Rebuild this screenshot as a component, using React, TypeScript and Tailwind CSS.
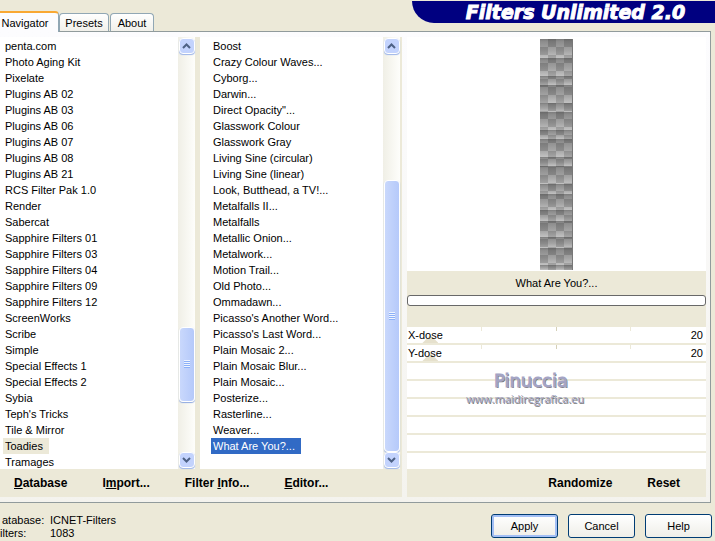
import React, { useState } from 'react';

const categories = [
    'penta.com', 'Photo Aging Kit', 'Pixelate', 'Plugins AB 02', 'Plugins AB 03',
    'Plugins AB 06', 'Plugins AB 07', 'Plugins AB 08', 'Plugins AB 21',
    'RCS Filter Pak 1.0', 'Render', 'Sabercat', 'Sapphire Filters 01',
    'Sapphire Filters 03', 'Sapphire Filters 04', 'Sapphire Filters 09',
    'Sapphire Filters 12', 'ScreenWorks', 'Scribe', 'Simple', 'Special Effects 1',
    'Special Effects 2', 'Sybia', "Teph's Tricks", 'Tile & Mirror', 'Toadies', 'Tramages',
];

const filters = [
    'Boost', 'Crazy Colour Waves...', 'Cyborg...', 'Darwin...', 'Direct Opacity"...',
    'Glasswork Colour', 'Glasswork Gray', 'Living Sine (circular)',
    'Living Sine (linear)', 'Look, Butthead, a TV!...', 'Metalfalls II...',
    'Metalfalls', 'Metallic Onion...', 'Metalwork...', 'Motion Trail...',
    'Old Photo...', 'Ommadawn...', "Picasso's Another Word...",
    "Picasso's Last Word...", 'Plain Mosaic 2...', 'Plain Mosaic Blur...',
    'Plain Mosaic...', 'Posterize...', 'Rasterline...', 'Weaver...', 'What Are You?...',
];

// Top edge of every dark-to-light band in the preview
const bands = [0, 19, 37, 46, 64, 73, 91, 100, 118, 127, 145, 155, 171, 182, 198, 209, 226, 231];

const Arrow = ({ up }: { up?: boolean }) => (
    <svg viewBox="0 0 9 6" className="w-[9px] h-[6px]" fill="none" stroke="#4d6185" strokeWidth="2">
        <path d={up ? 'M1 5L4.5 1.5L8 5' : 'M1 1L4.5 4.5L8 1'} />
    </svg>
);

const arrowClass =
    'h-4 w-4 shrink-0 flex items-center justify-center rounded-sm border border-white bg-[#c3d3fd] shadow-[0_1px_1px_#9db5e8]';

const ScrollBar = ({ start, size, label }: { start: number; size: number; label: string }) => (
    <div className="w-[17px] shrink-0 py-px flex flex-col items-center bg-linear-to-r from-[#f0efe6] to-[#fefefb]">
        <button aria-label={`${label} up`} className={arrowClass}>
            <Arrow up />
        </button>
        <div className="flex-1 w-4 flex flex-col">
            <div className="basis-0" style={{ flexGrow: start }} />
            <div
                style={{ flexGrow: size }}
                className="basis-0 rounded-sm border border-white bg-linear-to-r from-[#c9d8fc] to-[#b5c9fa] shadow-[0_1px_1px_#8ea9e0] flex flex-col items-center justify-center"
            >
                {[0, 1, 2, 3].map((line) => (
                    <span key={line} className="w-[6px] h-[2px] bg-[#eef4fe] border-b border-[#8cb0f8]" />
                ))}
            </div>
            <div className="basis-0" style={{ flexGrow: 398 - start - size }} />
        </div>
        <button aria-label={`${label} down`} className={arrowClass}>
            <Arrow />
        </button>
    </div>
);

interface ListProps {
    label: string;
    items: string[];
    selected: string;
    selectedClass: string;
    onSelect: (item: string) => void;
}

const List = ({ label, items, selected, selectedClass, onSelect }: ListProps) => (
    <ul aria-label={label} className="flex-1 min-w-0 pt-px bg-white">
        {items.map((item) => (
            <li key={item} className="h-4 flex">
                <button
                    onClick={() => onSelect(item)}
                    className={`h-4 pl-[2px] pr-[6px] whitespace-nowrap ${item === selected ? selectedClass : ''}`}
                >
                    {item}
                </button>
            </li>
        ))}
    </ul>
);

const Preview = () => (
    <svg viewBox="0 0 33 231" className="w-[33px] h-[231px]" shapeRendering="crispEdges">
        <defs>
            <linearGradient id="band" x1="0" y1="0" x2="0" y2="1">
                <stop offset="0" stopColor="#7c7c7c" />
                <stop offset="0.15" stopColor="#8e8e8e" />
                <stop offset="0.6" stopColor="#a4a4a4" />
                <stop offset="1" stopColor="#c2c2c2" />
            </linearGradient>
        </defs>
        {bands.slice(0, -1).map((top, i) => (
            <rect key={top} y={top} width="33" height={bands[i + 1] - top} fill="url(#band)" />
        ))}
        {Array.from({ length: 29 }, (_, row) =>
            [0, 1, 2, 3].map((col) =>
                (row + col) % 2 === 1 ? (
                    <rect key={`${row}-${col}`} x={col * 8} y={row * 8} width="8" height="8" fill="#000" opacity="0.15" />
                ) : null
            )
        )}
        <rect x="32" width="1" height="231" fill="#777" />
    </svg>
);

const Dose = ({ name }: { name: string }) => {
    const [value, setValue] = useState<number>(20);
    const id = name.toLowerCase();

    return (
        <div className="h-[18px] border-b-2 border-[#ece9d8] bg-white grid grid-cols-1 overflow-hidden">
            <div className="[grid-area:1/1] grid grid-cols-4 h-1">
                <span className="border-r border-[#ece9d8]" />
                <span className="border-r border-[#d5d0b8]" />
                <span className="border-r border-[#ece9d8]" />
            </div>
            <input
                id={id}
                type="range"
                min={0}
                max={255}
                value={value}
                onChange={(e) => setValue(Number(e.target.value))}
                className="[grid-area:1/1] -mx-2 h-4 appearance-none bg-transparent [&::-webkit-slider-runnable-track]:h-4 [&::-webkit-slider-thumb]:appearance-none [&::-webkit-slider-thumb]:w-4 [&::-webkit-slider-thumb]:h-2 [&::-webkit-slider-thumb]:mt-2 [&::-webkit-slider-thumb]:bg-[#e6e1cd] [&::-webkit-slider-thumb]:[clip-path:polygon(50%_0,100%_100%,0_100%)]"
            />
            <div className="[grid-area:1/1] z-10 flex justify-between pl-px pr-[3px] pointer-events-none">
                <label htmlFor={id}>{name}</label>
                <output htmlFor={id}>{value}</output>
            </div>
        </div>
    );
};

const tabClass = 'border border-b-0 border-[#91a7b4] rounded-t-sm bg-linear-to-b from-white to-[#f1f0ea]';
const dialogButton =
    'w-[67px] h-6 rounded-[3px] border border-[#003c74] bg-linear-to-b from-white to-[#efeee8]';

const App = () => {
    const [category, setCategory] = useState<string>('Toadies');
    const [filter, setFilter] = useState<string>('What Are You?...');

    return (
        <main className="min-h-screen overflow-hidden bg-[#ece9d8] text-black text-[11px] leading-4 font-['Liberation_Sans',Arial,sans-serif]">
            <header className="h-[31px] flex items-end">
                <nav className="flex items-end">
                    <button className="w-[59px] h-[21px] -mb-px pr-2 z-10 border-t-2 border-r border-t-[#f9a832] border-r-[#91a7b4] rounded-tr-sm bg-[#fcfcfe]">
                        Navigator
                    </button>
                    <button className={`w-[50px] h-[18px] ${tabClass}`}>Presets</button>
                    <button className={`w-[44px] h-[18px] ml-px ${tabClass}`}>About</button>
                </nav>
                <h1 className="ml-auto self-start mt-px w-[303px] h-[22px] pl-6 flex items-center justify-center rounded-bl-[24px] bg-[#000080] text-white text-[19px] italic font-bold whitespace-nowrap [-webkit-text-stroke:1px_white] font-['DejaVu_Sans',sans-serif]">
                    Filters Unlimited 2.0
                </h1>
            </header>

            <section className="mr-1 py-[5px] pr-1 flex gap-[5px] border-t border-r border-b border-[#919b9c] bg-linear-to-b from-[#fcfcfe] to-[#f4f3ee]">
                <div className="w-[402px] shrink-0 flex flex-col bg-[#ece9d8]">
                    <div className="h-[432px] flex">
                        <div className="w-[195px] flex bg-white pl-[3px]">
                            <List
                                label="Categories"
                                items={categories}
                                selected={category}
                                selectedClass="bg-[#ece9d8]"
                                onSelect={setCategory}
                            />
                            <ScrollBar start={274} size={74} label="Categories" />
                        </div>
                        <div className="w-[200px] ml-[5px] flex bg-white pl-[11px]">
                            <List
                                label="Filters"
                                items={filters}
                                selected={filter}
                                selectedClass="bg-[#316ac5] text-white"
                                onSelect={setFilter}
                            />
                            <ScrollBar start={127} size={271} label="Filters" />
                        </div>
                    </div>
                    <div className="h-7 pl-[14px] flex items-center gap-[35px] text-xs font-bold">
                        <button><u>D</u>atabase</button>
                        <button>I<u>m</u>port...</button>
                        <button>Filter <u>I</u>nfo...</button>
                        <button><u>E</u>ditor...</button>
                    </div>
                </div>

                <div className="flex-1 flex flex-col bg-[#ece9d8]">
                    <div className="flex-1 flex items-center justify-center bg-white">
                        <Preview />
                    </div>
                    <div className="h-14 pt-1 text-center">
                        <p>What Are You?...</p>
                        <div
                            role="progressbar"
                            aria-label="Progress"
                            className="mt-1 h-[11px] rounded-[3px] border border-[#686868] bg-white"
                        />
                    </div>
                    <Dose name="X-dose" />
                    <Dose name="Y-dose" />
                    <div className="relative">
                        <div className="absolute top-2 left-[57px] w-[122px] text-center text-[#a4a4c4] [text-shadow:1px_1px_0_#777]">
                            <p className="pl-3 text-lg leading-5 [-webkit-text-stroke:1px_#a4a4c4] font-['Comic_Sans_MS','DejaVu_Sans',sans-serif]">Pinuccia</p>
                            <p className="leading-4 whitespace-nowrap font-['Comic_Sans_MS','Open_Sans',sans-serif]">www.maidiregrafica.eu</p>
                        </div>
                        {[0, 1, 2, 3, 4, 5].map((row) => (
                            <div key={row} className="h-[18px] border-b-2 border-[#ece9d8] bg-white last:h-4 last:border-b-0" />
                        ))}
                    </div>
                    <div className="h-7 pr-[26px] flex items-center justify-end gap-[35px] text-xs font-bold">
                        <button>Randomize</button>
                        <button>Reset</button>
                    </div>
                </div>
            </section>

            <footer className="pt-[11px] pr-[3px] flex items-start justify-between">
                <dl className="grid grid-cols-[50px_auto] leading-[13px]">
                    <dt className="pl-[2px]">atabase:</dt>
                    <dd>ICNET-Filters</dd>
                    <dt>ilters:</dt>
                    <dd>1083</dd>
                </dl>
                <div className="flex gap-[10px]">
                    <button className={`${dialogButton} shadow-[inset_0_0_0_2px_#a3bff5]`}>Apply</button>
                    <button className={dialogButton}>Cancel</button>
                    <button className={dialogButton}>Help</button>
                </div>
            </footer>
        </main>
    );
};

export default App;
